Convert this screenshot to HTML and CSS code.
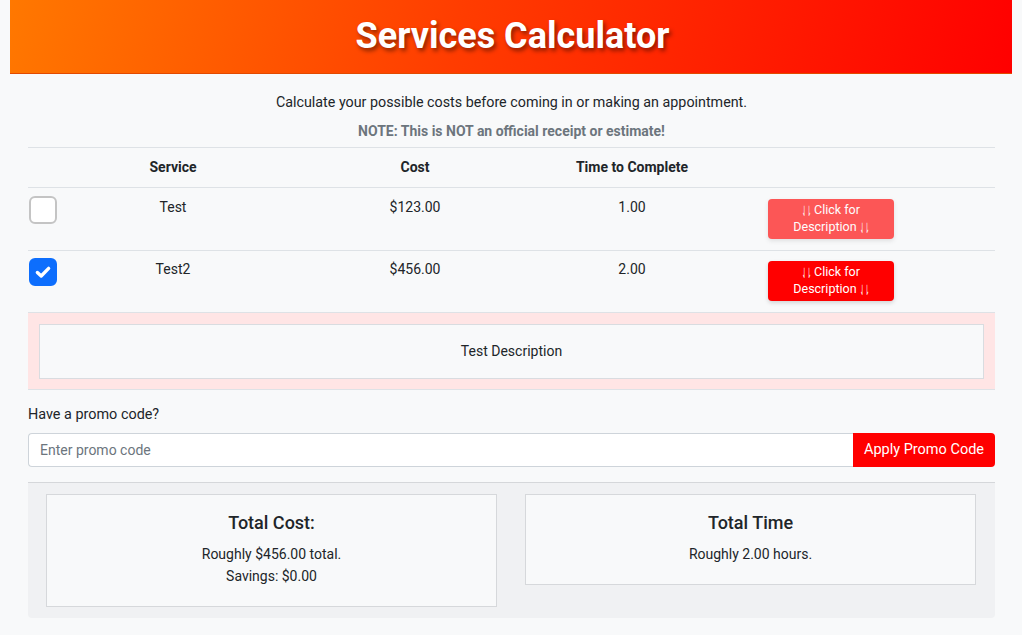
FILE: index.html
```html
<!DOCTYPE html>
<html lang="en">
<head>
<meta charset="utf-8">
<title>Services Calculator</title>
<link rel="stylesheet" href="styles.css">
</head>
<body>
<header class="hero">
  <h1 class="hero-title">Services Calculator</h1>
</header>
<main class="content">
  <p class="intro">Calculate your possible costs before coming in or making an appointment.</p>
  <p class="note">NOTE: This is NOT an official receipt or estimate!</p>

  <div class="table">
    <div class="row head">
      <div class="cell"></div>
      <div class="cell">Service</div>
      <div class="cell">Cost</div>
      <div class="cell">Time to Complete</div>
      <div class="cell"></div>
      <div class="cell"></div>
    </div>
    <div class="row item">
      <div class="cell check-cell"><span class="check"></span></div>
      <div class="cell">Test</div>
      <div class="cell">$123.00</div>
      <div class="cell">1.00</div>
      <div class="cell"><button class="desc-btn faded"><span class="arr">⇃⇂</span> Click for Description <span class="arr">⇃⇂</span></button></div>
      <div class="cell"></div>
    </div>
    <div class="row item tight">
      <div class="cell check-cell"><span class="check on"><svg viewBox="0 0 16 16" width="18" height="18"><path d="M3 8.4 L6.4 11.6 L13 4.8" fill="none" stroke="#fff" stroke-width="3" stroke-linecap="round" stroke-linejoin="round"/></svg></span></div>
      <div class="cell">Test2</div>
      <div class="cell">$456.00</div>
      <div class="cell">2.00</div>
      <div class="cell"><button class="desc-btn"><span class="arr">⇃⇂</span> Click for Description <span class="arr">⇃⇂</span></button></div>
      <div class="cell"></div>
    </div>
    <div class="desc-row">
      <div class="desc-box">Test Description</div>
    </div>
  </div>

  <label class="promo-label" for="promo">Have a promo code?</label>
  <div class="promo-group">
    <input id="promo" class="promo-input" type="text" placeholder="Enter promo code">
    <button class="promo-btn">Apply Promo Code</button>
  </div>

  <section class="totals">
    <div class="card">
      <h2 class="card-title">Total Cost:</h2>
      <p class="card-line">Roughly $456.00 total.</p>
      <p class="card-line">Savings: $0.00</p>
    </div>
    <div class="card">
      <h2 class="card-title">Total Time</h2>
      <p class="card-line">Roughly 2.00 hours.</p>
    </div>
  </section>
</main>
</body>
</html>
```

FILE: styles.css
```css
* { box-sizing: border-box; }

body {
  margin: 0;
  background: #f8f9fa;
  font-family: Roboto, "Liberation Sans", sans-serif;
  font-size: 14px;
  color: #212529;
}

.hero {
  margin: 0 10px;
  height: 74px;
  background: linear-gradient(105deg, #ff7800 0%, #ff3c00 45%, #ff0000 100%);
  border-bottom: 1px solid #e24a00;
  display: flex;
  align-items: center;
  justify-content: center;
}

.hero-title {
  margin: 0;
  color: #fff;
  font-size: 36px;
  font-weight: 700;
  text-shadow: 2px 3px 4px rgba(0, 0, 0, 0.45);
  line-height: 1;
  padding: 0 0 2px 3px;
}

.content {
  margin: 0 27px 0 28px;
  padding-top: 18px;
}

.intro {
  margin: 0;
  text-align: center;
  line-height: 20px;
  font-size: 14.3px;
}

.note {
  margin: 9px 0 0;
  text-align: center;
  font-weight: 700;
  color: #6c757d;
  line-height: 20px;
}

.table {
  margin-top: 6px;
  border-top: 1px solid #dee2e6;
}

.row {
  display: grid;
  grid-template-columns: 42px 206px 278px 156px 242px 1fr;
  border-bottom: 1px solid #dee2e6;
}

.cell {
  text-align: center;
  line-height: 20px;
}

.head {
  height: 40px;
  align-items: center;
  font-weight: 700;
  padding-bottom: 2px;
}

.item {
  height: 63px;
  align-items: start;
  padding-top: 9px;
}

.item.tight {
  height: 62px;
  padding-top: 8px;
}

.check-cell {
  text-align: left;
}

.check {
  display: flex;
  align-items: center;
  justify-content: center;
  width: 28px;
  height: 28px;
  margin-top: -1px;
  margin-left: 1px;
  border: 2px solid #c4c4c4;
  border-radius: 6px;
  background: #fff;
}

.check.on {
  background: #0d6efd;
  border-color: #0d6efd;
}

.desc-btn {
  margin-top: 2px;
  width: 126px;
  height: 40px;
  padding: 3px 6px;
  border: 0;
  border-radius: 4px;
  background: #ff0000;
  color: #fff;
  font-family: Roboto, "DejaVu Sans", sans-serif;
  font-size: 12.5px;
  line-height: 16px;
  box-shadow: 0 2px 4px rgba(0, 0, 0, 0.15);
}

.arr {
  display: inline-block;
  width: 9px;
  white-space: nowrap;
  font-family: "DejaVu Sans", sans-serif;
  font-size: 14px;
  line-height: 16px;
  transform: scaleX(0.4);
  transform-origin: left center;
  vertical-align: -2px;
}

.desc-btn.faded { opacity: 0.65; }

.desc-row {
  background: #ffe5e5;
  padding: 11px 11px 10px;
  border-bottom: 1px solid #dee2e6;
}

.desc-box {
  height: 55px;
  border: 1px solid #d9dce0;
  background: #f8f9fa;
  display: flex;
  align-items: center;
  justify-content: center;
  padding-bottom: 2px;
}

.promo-label {
  display: block;
  margin-top: 15px;
  line-height: 20px;
  font-size: 14.4px;
}

.promo-group {
  display: flex;
  margin-top: 8px;
  height: 34px;
}

.promo-input {
  flex: 1;
  border: 1px solid #ced4da;
  border-right: 0;
  border-radius: 4px 0 0 4px;
  background: #fff;
  padding: 0 11px;
  font-family: Roboto, sans-serif;
  font-size: 14px;
  color: #212529;
}

.promo-input::placeholder { color: #6c757d; }

.promo-btn {
  width: 142px;
  border: 0;
  border-radius: 0 4px 4px 0;
  background: #ff0000;
  color: #fff;
  font-family: Roboto, sans-serif;
  font-size: 14.5px;
  padding-bottom: 2px;
}

.totals {
  margin-top: 15px;
  display: grid;
  grid-template-columns: 1fr 1fr;
  column-gap: 28px;
  align-items: start;
  padding: 11px 19px 11px 18px;
  background: #f0f1f3;
  border-top: 1px solid #d5d7da;
  border-radius: 0 0 4px 4px;
}

.card {
  background: #f8f9fa;
  border: 1px solid #d6d8db;
  padding: 15px 12px 19px;
  text-align: center;
}

.card-title {
  margin: 0 0 7px;
  font-size: 18px;
  font-weight: 500;
  line-height: 26px;
}

.card-line {
  margin: 0;
  line-height: 22px;
}
```
